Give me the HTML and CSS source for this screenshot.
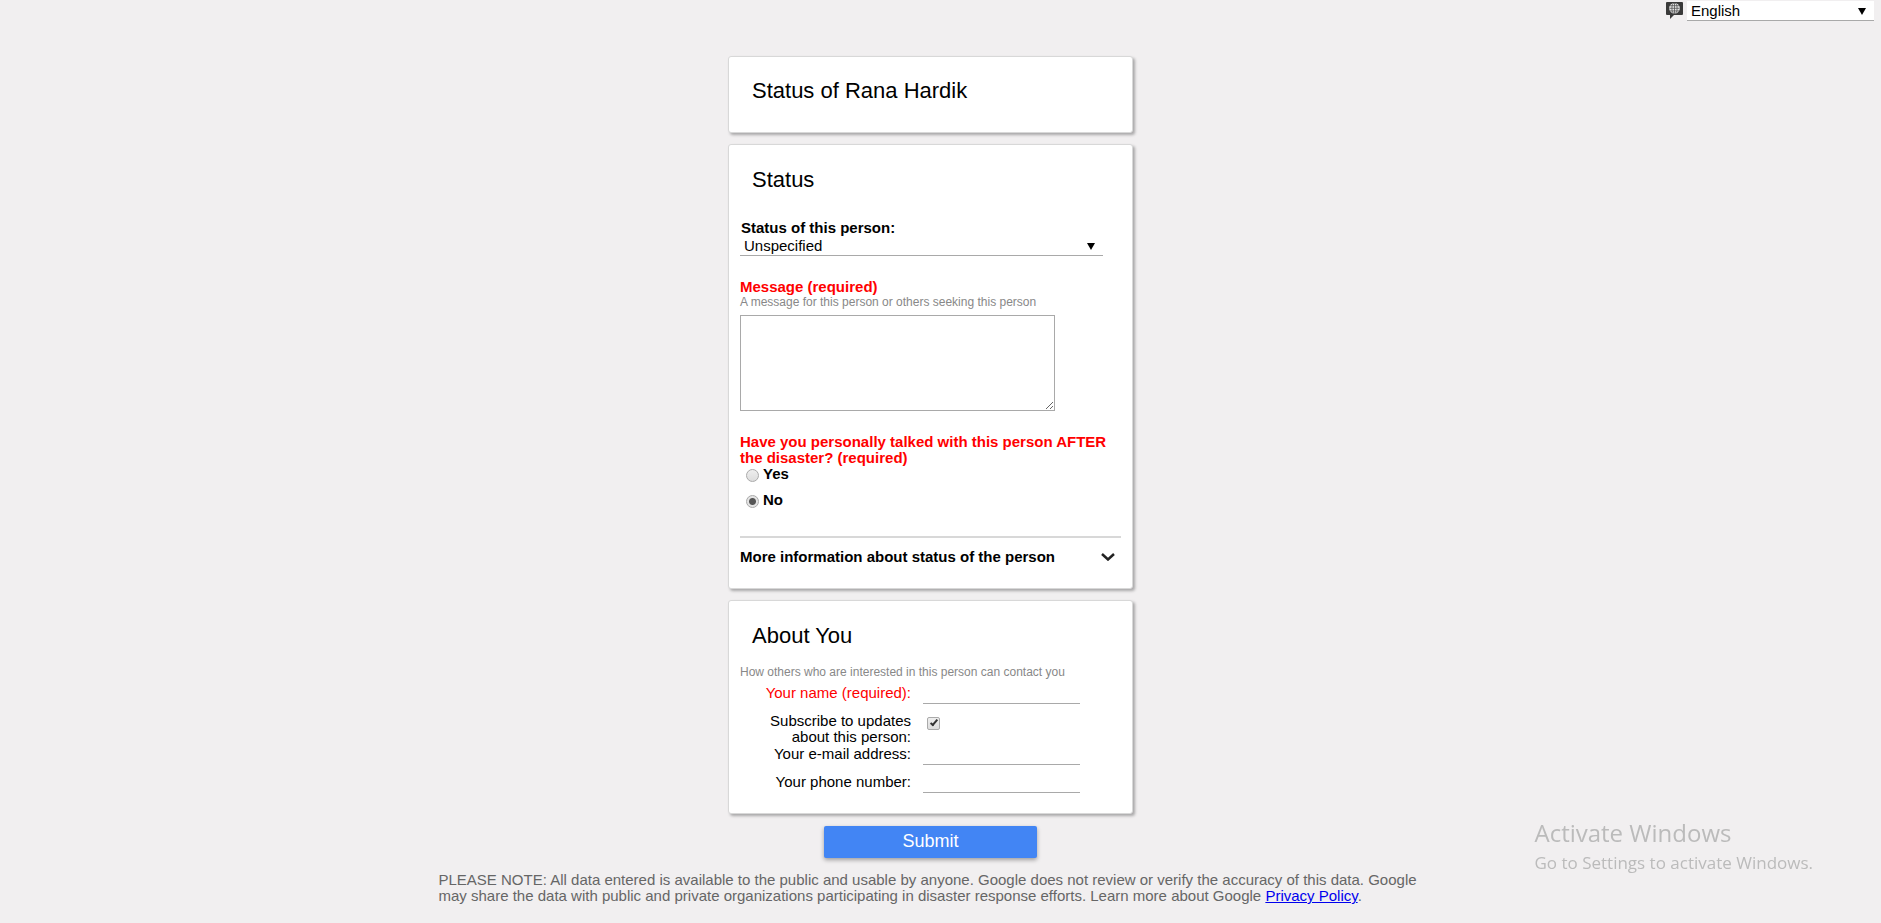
FILE: index.html
```html
<!DOCTYPE html>
<html lang="en">
<head>
<meta charset="utf-8">
<title>Status of Rana Hardik</title>
<link rel="stylesheet" href="styles.css">
</head>
<body>
<header class="topbar">
  <svg class="lang-icon" viewBox="0 0 17 17" aria-hidden="true">
    <path d="M1 0h15q1 0 1 1v11q0 1-1 1H8l-4 4v-4H1q-1 0-1-1V1q0-1 1-1z" fill="#3a3a3a"/>
    <circle cx="8.5" cy="6.3" r="5.4" fill="#e4e4e4"/>
    <g fill="none" stroke="#555" stroke-width=".8">
      <ellipse cx="8.5" cy="6.3" rx="2.6" ry="5.2"/>
      <path d="M8.5 1v10.6M3.3 6.3h10.4M4 3.7h9M4 8.9h9"/>
    </g>
  </svg>
  <div class="select lang-select">
    <select aria-label="Language"><option>English</option></select>
  </div>
</header>
<main class="page">
  <form class="form">
    <section class="card card-title">
      <h1 class="heading">Status of Rana Hardik</h1>
    </section>
    <section class="card card-status">
      <h2 class="heading">Status</h2>
      <label class="label status-label" for="status">Status of this person:</label>
      <div class="select status-select">
        <select id="status"><option>Unspecified</option></select>
      </div>
      <label class="label required" for="message">Message (required)</label>
      <p class="hint">A message for this person or others seeking this person</p>
      <textarea class="message" id="message"></textarea>
      <fieldset class="talked">
        <legend class="label required">Have you personally talked with this person AFTER the disaster? (required)</legend>
        <label class="label option"><input class="radio" type="radio" name="talked">Yes</label>
        <label class="label option"><input class="radio" type="radio" name="talked" checked>No</label>
      </fieldset>
      <button class="label more" type="button">
        <span>More information about status of the person</span>
        <svg class="chevron" viewBox="0 0 14 8" aria-hidden="true"><path d="M1 1l6 5.5L13 1" fill="none" stroke="#222" stroke-width="2.5"/></svg>
      </button>
    </section>
    <section class="card card-about">
      <h2 class="heading">About You</h2>
      <p class="hint">How others who are interested in this person can contact you</p>
      <div class="row required"><label for="name">Your name (required):</label><input class="field" id="name" type="text"></div>
      <div class="row row-check"><label for="subscribe">Subscribe to updates about this person:</label><input class="check" id="subscribe" type="checkbox" checked></div>
      <div class="row"><label for="email">Your e-mail address:</label><input class="field" id="email" type="email"></div>
      <div class="row"><label for="phone">Your phone number:</label><input class="field" id="phone" type="tel"></div>
    </section>
    <button class="submit" type="submit">Submit</button>
  </form>
  <p class="note">PLEASE NOTE: All data entered is available to the public and usable by anyone. Google does not review or verify the accuracy of this data. Google may share the data with public and private organizations participating in disaster response efforts. Learn more about Google <a href="#">Privacy Policy</a>.</p>
</main>
<aside class="watermark">
  <p class="watermark-title">Activate Windows</p>
  <p class="watermark-text">Go to Settings to activate Windows.</p>
</aside>
</body>
</html>
```
FILE: styles.css
```css
* { box-sizing: border-box; }
body {
  margin: 0;
  background: #f1eff0;
  color: #000;
  font: 15px/16px "Liberation Sans", Arial, sans-serif;
}
h1, h2, p { margin: 0; }
input, select, textarea, button { font: inherit; color: inherit; }

.topbar {
  display: flex;
  justify-content: flex-end;
  gap: 4px;
  padding: 1px 7px 0 0;
}
.lang-icon { width: 17px; height: 17px; margin-top: 1px; }
.lang-select { width: 187px; }

.select { position: relative; border-bottom: 1px solid #a9a9a9; background: #fff; }
.select select {
  display: block;
  width: 100%;
  height: 19px;
  padding: 0 4px;
  border: 0;
  background: transparent;
  appearance: none;
}
.select::after {
  content: "";
  position: absolute;
  right: 8px;
  top: 7px;
  border: solid transparent;
  border-width: 7px 4px 0;
  border-top-color: #000;
  pointer-events: none;
}

.page { padding: 35px 20px 16px 0; }
.form {
  display: flex;
  flex-direction: column;
  align-items: center;
  gap: 11px;
}
.card {
  width: 100%;
  max-width: 405px;
  padding: 21px 11px;
  border: 1px solid #d8d8d8;
  border-radius: 3px;
  background: #fff;
  box-shadow: 2px 2px 3px rgba(0, 0, 0, .3);
}
.card-title { padding-top: 20px; padding-bottom: 27px; }
.heading { padding-left: 12px; font-size: 22px; line-height: 28px; font-weight: 400; }
.label { display: block; font-weight: 700; }
.required { color: #f00; }
.hint { color: #888; font-size: 12px; line-height: 14px; }

.status-label { margin-top: 26px; padding-left: 1px; }
.status-select { width: 363px; margin-bottom: 23px; }
.message {
  display: block;
  width: 315px;
  height: 96px;
  margin-top: 6px;
  border: 1px solid #a9a9a9;
  background: #fff;
}
.talked { margin: 23px 0 0; padding: 0; border: 0; }
.talked legend { padding: 0; }
.option { display: flex; gap: 4px; margin-bottom: 10px; }
.radio {
  appearance: none;
  width: 13px;
  height: 13px;
  margin: 3px 0 0 6px;
  border: 1px solid #aaa;
  border-radius: 50%;
  background: linear-gradient(#eee, #ddd);
}
.radio:checked { background: radial-gradient(circle, #555 0 3px, #e4e4e4 4px); }
.more {
  display: flex;
  justify-content: space-between;
  align-items: center;
  width: 100%;
  margin-top: 18px;
  padding: 11px 6px 0 0;
  border: 0;
  border-top: 2px solid #d8d8d8;
  background: none;
  text-align: left;
}
.chevron { width: 14px; height: 8px; }
.card-status { padding-bottom: 23px; }

.card-about .hint { margin: 15px 0 6px; }
.row {
  display: grid;
  grid-template-columns: 171px 157px;
  column-gap: 12px;
  margin-bottom: 9px;
  text-align: right;
}
.row-check { margin-bottom: 1px; }
.row-check label { padding-left: 30px; }
.field {
  height: 19px;
  padding: 0 2px;
  border: 0;
  border-bottom: 1px solid #a9a9a9;
  background: transparent;
}
.check {
  appearance: none;
  position: relative;
  width: 13px;
  height: 13px;
  margin: 4px 0 0 4px;
  border: 1px solid #aaa;
  border-radius: 2px;
  background: linear-gradient(#eee, #ddd);
}
.check:checked::after {
  content: "";
  position: absolute;
  left: 4px;
  top: 0;
  box-sizing: content-box;
  width: 2px;
  height: 6px;
  border: solid #333;
  border-width: 0 2px 2px 0;
  transform: rotate(40deg);
}
.card-about { padding-bottom: 11px; }

.submit {
  width: 213px;
  height: 32px;
  margin-top: 1px;
  padding: 0 0 2px;
  border: 0;
  border-radius: 2px;
  background: #4285f4;
  color: #fff;
  font-size: 18px;
  box-shadow: 0 2px 4px rgba(0, 0, 0, .35);
}
.note { max-width: 984px; margin: 14px auto 0; color: #666; }
.note a { color: #00e; }

.watermark {
  position: fixed;
  right: 68px;
  bottom: 47px;
  color: #bbb;
  font-family: "Open Sans", sans-serif;
}
.watermark-title { font-size: 24px; line-height: 34px; }
.watermark-text { font-size: 17px; line-height: 26px; }
```
